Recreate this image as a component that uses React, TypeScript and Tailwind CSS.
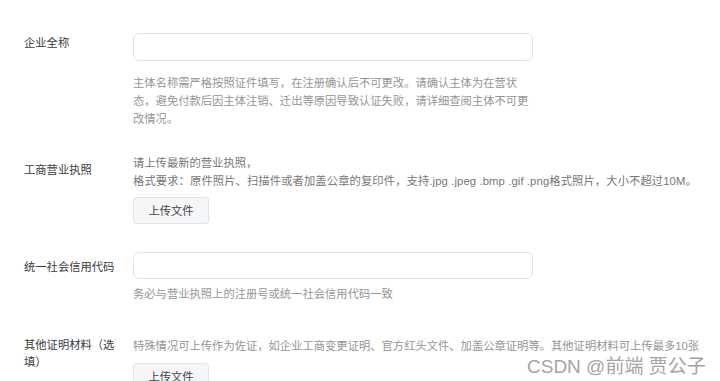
import React from 'react';

const FONT = "font-['Liberation_Sans','Noto_Sans_CJK_SC',sans-serif]";

function UploadButton() {
    return (
        <button className="w-[76px] h-[27px] rounded-[3px] border border-[#e3e4e6] bg-[#f5f6f7] text-[11.3px] text-[#444]">
            上传文件
        </button>
    );
}

export default function App() {
    return (
        <div className={`relative w-[720px] h-[381px] overflow-hidden bg-white ${FONT}`}>
            <div className="pt-[33px] pl-6 flex flex-col text-[11.3px] leading-[18px]">
                {/* 企业全称 */}
                <div className="flex">
                    <div className="w-[109px] shrink-0 mt-px text-[#3a3a3a]">企业全称</div>
                    <div className="w-[400px]">
                        <div className="h-[28px] rounded-[6px] border border-[#e4e4e4] bg-white" />
                        <p className="mt-[13px] text-[#959595]">
                            主体名称需严格按照证件填写，在注册确认后不可更改。请确认主体为在营状态，避免付款后因主体注销、迁出等原因导致认证失败，请详细查阅主体不可更改情况。
                        </p>
                    </div>
                </div>

                {/* 工商营业执照 */}
                <div className="flex mt-[26px]">
                    <div className="w-[109px] shrink-0 mt-[7px] text-[#3a3a3a]">工商营业执照</div>
                    <div className="flex-1">
                        <p className="text-[#777]">请上传最新的营业执照，</p>
                        <p className="text-[#777] whitespace-nowrap tracking-[0.1px]">
                            格式要求：原件照片、扫描件或者加盖公章的复印件，支持.jpg .jpeg .bmp .gif .png格式照片，大小不超过10M。
                        </p>
                        <div className="mt-[7px]">
                            <UploadButton />
                        </div>
                    </div>
                </div>

                {/* 统一社会信用代码 */}
                <div className="flex mt-[28px]">
                    <div className="w-[109px] shrink-0 mt-[6px] text-[#3a3a3a]">统一社会信用代码</div>
                    <div className="w-[400px]">
                        <div className="h-[27px] rounded-[6px] border border-[#e4e4e4] bg-white" />
                        <p className="mt-[6px] text-[#959595]">务必与营业执照上的注册号或统一社会信用代码一致</p>
                    </div>
                </div>

                {/* 其他证明材料 */}
                <div className="flex mt-[34px]">
                    <div className="w-[109px] shrink-0 pr-[12px] leading-[17px] text-[#3a3a3a]">其他证明材料（选填）</div>
                    <div className="flex-1">
                        <p className="text-[#959595] whitespace-nowrap">
                            特殊情况可上传作为佐证，如企业工商变更证明、官方红头文件、加盖公章证明等。其他证明材料可上传最多10张
                        </p>
                        <div className="mt-[8px]">
                            <UploadButton />
                        </div>
                    </div>
                </div>
            </div>

            {/* 水印 */}
            <div className="absolute left-[527px] top-[356px] text-[19px] leading-[22px] text-[#a5a5a5] whitespace-nowrap">
                CSDN @前端 贾公子
            </div>
        </div>
    );
}
